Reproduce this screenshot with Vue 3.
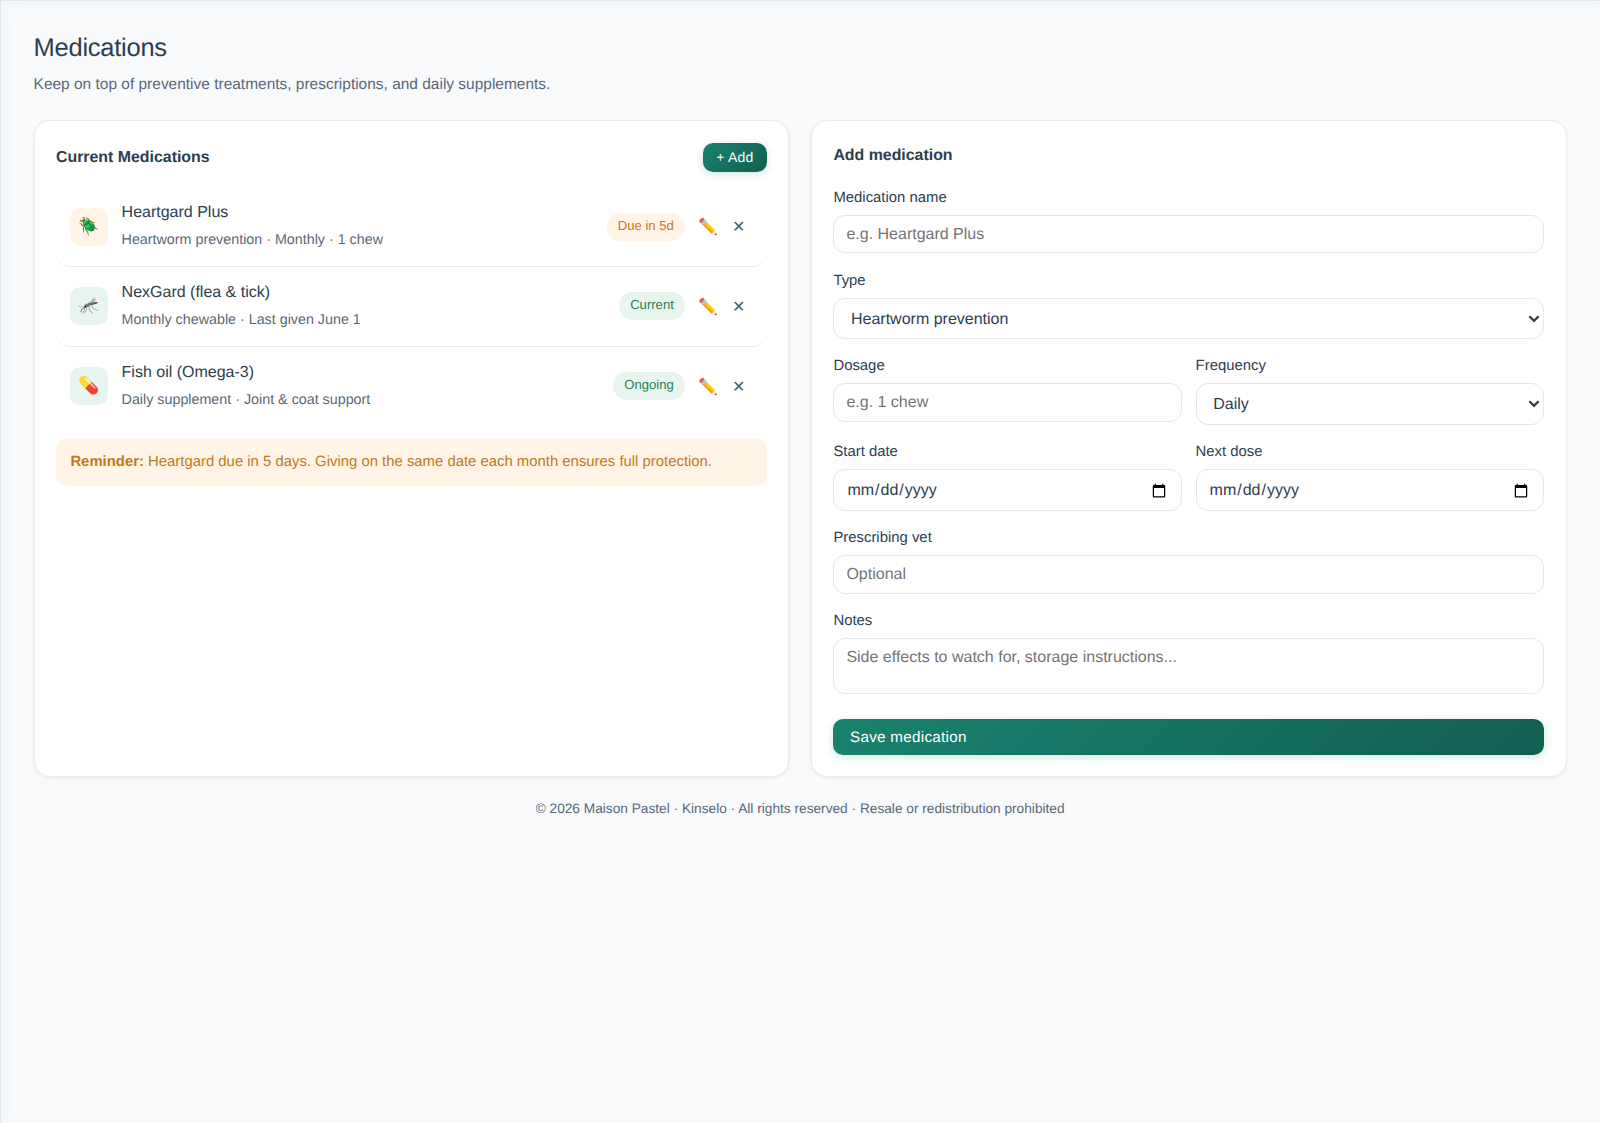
<script setup>
import { ref } from "vue"

const medications = ref([
    { id: 1, icon: "🪲", name: "Heartgard Plus", detail: "Heartworm prevention · Monthly · 1 chew", status: "Due in 5d", tone: "warn" },
    { id: 2, icon: "🦟", name: "NexGard (flea & tick)", detail: "Monthly chewable · Last given June 1", status: "Current", tone: "ok" },
    { id: 3, icon: "💊", name: "Fish oil (Omega-3)", detail: "Daily supplement · Joint & coat support", status: "Ongoing", tone: "ok" },
]);

const types = ["Heartworm prevention", "Flea & tick", "Supplement", "Prescription"]
const frequencies = ["Daily", "Weekly", "Monthly", "As needed"]

const type = ref(types[0]);
const frequency = ref(frequencies[0]);

function removeMedication(id) {
    medications.value = medications.value.filter((m) => m.id !== id)
}
</script>

<template>
    <main class="page">
        <h1 class="page-title">Medications</h1>
        <p class="page-subtitle">Keep on top of preventive treatments, prescriptions, and daily supplements.</p>

        <div class="columns">
            <section class="card">
                <div class="card-head">
                    <h2>Current Medications</h2>
                    <button class="btn btn-small">+ Add</button>
                </div>

                <ul class="med-list">
                    <li v-for="med in medications" :key="med.id" class="med-row">
                        <span class="med-icon" :class="med.tone">{{ med.icon }}</span>
                        <div class="med-info">
                            <div class="med-name">{{ med.name }}</div>
                            <div class="med-detail">{{ med.detail }}</div>
                        </div>
                        <span class="pill" :class="med.tone">{{ med.status }}</span>
                        <button class="icon-btn edit" aria-label="Edit">✏️</button>
                        <button class="icon-btn remove" aria-label="Remove" @click="removeMedication(med.id)">✕</button>
                    </li>
                </ul>

                <p class="reminder"><strong>Reminder:</strong> Heartgard due in 5 days. Giving on the same date each month ensures full protection.</p>
            </section>

            <section class="card">
                <h2 class="form-title">Add medication</h2>
                <form class="med-form" @submit.prevent>
                    <label class="field wide">
                        <span>Medication name</span>
                        <input type="text" placeholder="e.g. Heartgard Plus">
                    </label>
                    <label class="field wide tall">
                        <span>Type</span>
                        <select v-model="type">
                            <option v-for="t in types" :key="t">{{ t }}</option>
                        </select>
                        <svg class="chevron" viewBox="0 0 12 8">
                            <path d="M1.4 1.2 6 5.8l4.6-4.6" />
                        </svg>
                    </label>
                    <label class="field">
                        <span>Dosage</span>
                        <input type="text" placeholder="e.g. 1 chew">
                    </label>
                    <label class="field tall">
                        <span>Frequency</span>
                        <select v-model="frequency">
                            <option v-for="f in frequencies" :key="f">{{ f }}</option>
                        </select>
                        <svg class="chevron" viewBox="0 0 12 8">
                            <path d="M1.4 1.2 6 5.8l4.6-4.6" />
                        </svg>
                    </label>
                    <label class="field tall">
                        <span>Start date</span>
                        <input type="date">
                    </label>
                    <label class="field tall">
                        <span>Next dose</span>
                        <input type="date">
                    </label>
                    <label class="field wide">
                        <span>Prescribing vet</span>
                        <input type="text" placeholder="Optional">
                    </label>
                    <label class="field wide">
                        <span>Notes</span>
                        <textarea placeholder="Side effects to watch for, storage instructions..."></textarea>
                    </label>
                    <button class="btn btn-save wide">Save medication</button>
                </form>
            </section>
        </div>

        <footer class="footer">© 2026 Maison Pastel · Kinselo · All rights reserved · Resale or redistribution prohibited</footer>
    </main>
</template>

<style>
body {
    background-color: #f8fafc;
}
</style>

<style scoped>
* {
    box-sizing: border-box;
    margin: 0;
}

.page {
    min-height: 1123px;
    padding: 31.6px 33.4px 0 32.6px;
    border-top: 1px solid #e2e5e9;
    border-left: 1px solid #e2e5e9;
    background-color: #f8fafc;
    box-shadow: inset 7px 7px 13px rgba(15, 23, 42, 0.02);
    color: #2c3e50;
    font-family: "Liberation Sans", Arial, sans-serif;
    font-size: 16px;
    text-rendering: geometricPrecision;
}

.page-title {
    font-size: 25.5px;
    font-weight: 400;
    line-height: 31px;
    letter-spacing: -0.256px;
}

.page-subtitle {
    margin-top: 8px;
    color: #5a6878;
    font-size: 15.48px;
    line-height: 26px;
}

.columns {
    display: grid;
    grid-template-columns: 1fr 1fr;
    gap: 21.8px;
    height: 655.6px;
    margin-top: 22.8px;
}

.card {
    padding: 21.4px;
    border: 1px solid #e8ecef;
    border-radius: 16px;
    background-color: #fff;
    box-shadow: 0 1px 4px rgba(15, 23, 42, 0.06);
}

h2 {
    font-size: 15.9px;
    font-weight: 700;
    line-height: 26px;
}

.card-head {
    display: flex;
    justify-content: space-between;
    align-items: center;
    height: 29px;
}

.card-head h2 {
    padding-top: 1.4px;
}

.btn {
    border: none;
    border-radius: 10px;
    background: linear-gradient(135deg, #1a8270, #125e50);
    box-shadow: 0 2px 8px rgba(26, 130, 112, 0.22);
    color: #fff;
    font-family: inherit;
    text-rendering: inherit;
    cursor: pointer;
}

.btn-small {
    height: 28.6px;
    padding: 0 13.4px;
    font-size: 14px;
    letter-spacing: 0.2px;
}

.med-list {
    margin-top: 15.8px;
    padding: 0;
    list-style: none;
}

.med-row {
    display: flex;
    align-items: center;
    height: 79.6px;
    padding: 0 14px;
    border-bottom: 1px solid #e8ecef;
    border-radius: 14px;
}

.med-row:last-child {
    border-bottom-color: transparent;
}

.med-icon {
    display: flex;
    justify-content: center;
    align-items: center;
    width: 38px;
    height: 38px;
    margin-right: 13.6px;
    border-radius: 10px;
    font-size: 17px;
}

.ok {
    background-color: #e8f5ee;
    color: #2a7f55;
}

.warn {
    background-color: #fff4e6;
    color: #c07a1a;
}

.med-info {
    flex: 1;
}

.med-name {
    font-size: 16px;
    line-height: 27px;
}

.med-detail {
    color: #5a6878;
    font-size: 14.3px;
    line-height: 28px;
}

.pill {
    height: 28px;
    padding: 0 11px;
    border-radius: 14px;
    font-size: 13.1px;
    line-height: 26px;
}

.icon-btn {
    padding: 0;
    border: none;
    background: none;
    color: #4a5b6e;
    font-family: inherit;
    font-size: 16px;
    cursor: pointer;
}

.edit {
    width: 20px;
    margin-left: 13.6px;
}

.remove {
    width: 14px;
    margin: 0 7px 0 13.4px;
}

.reminder {
    margin-top: 12.4px;
    padding: 0.6px 14.4px 0;
    border-radius: 10px;
    background-color: #fff4e6;
    color: #c07a1a;
    font-size: 14.88px;
    line-height: 46.4px;
}

.form-title {
    margin-bottom: 15.8px;
}

.med-form {
    display: grid;
    grid-template-columns: 1fr 1fr;
    column-gap: 13.6px;
}

.wide {
    grid-column: 1 / -1;
}

.field {
    position: relative;
    display: block;
    margin-bottom: 14.4px;
}

.field span {
    display: block;
    height: 30px;
    font-size: 14.88px;
    line-height: 27.6px;
}

.field input,
.field select,
.field textarea {
    display: block;
    width: 100%;
    height: 38.6px;
    padding: 1.6px 12px 0;
    border: 1px solid #e3e8e8;
    border-radius: 12px;
    outline: none;
    background-color: #fff;
    color: #2c3e50;
    font-family: inherit;
    font-size: 16px;
    text-rendering: inherit;
    resize: none;
}

.field.tall input,
.field.tall select {
    height: 41.4px;
}

.field textarea {
    height: 56.6px;
    padding-top: 10.6px;
}

.field select {
    padding: 1.6px 24px 0 16.6px;
    appearance: none;
}

/* Sits over the right end of the select */
.chevron {
    position: absolute;
    right: 4.4px;
    bottom: 16.4px;
    width: 12px;
    height: 8px;
    fill: none;
    stroke: #2c3e50;
    stroke-width: 2.3;
    pointer-events: none;
}

.btn-save {
    height: 35.2px;
    margin-top: 10.6px;
    padding: 0 16.6px;
    font-size: 15.2px;
    letter-spacing: 0.3px;
    text-align: left;
}

.footer {
    margin-top: 22.8px;
    color: #5a6878;
    font-size: 13.7px;
    line-height: 20px;
    text-align: center;
}
</style>
